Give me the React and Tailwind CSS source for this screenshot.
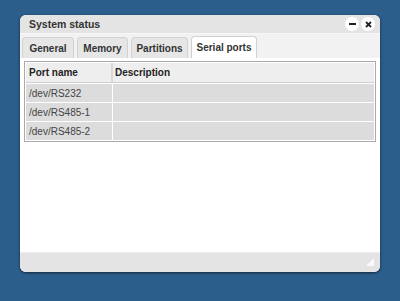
export default function App() {
  const rows = ["/dev/RS232", "/dev/RS485-1", "/dev/RS485-2"];
  const tabs = ["General", "Memory", "Partitions", "Serial ports"];
  const widths = ["w-[52px]", "w-[51px]", "w-[57px]", "w-[66px]"];
  return (
    <div
      className="w-[400px] h-[301px] bg-[#2c5e8c] pt-[15px] pl-[20px]"
      style={{ fontFamily: '"Liberation Sans", Arial, sans-serif' }}
    >
      <div className="w-[360px] h-[257px] rounded-[6px] overflow-hidden flex flex-col bg-white shadow-[0_1px_3px_rgba(0,0,0,0.6)]">
        <div className="h-[18px] bg-[#e4e4e4] flex items-center justify-between pl-[9px] pr-[5px]">
          <span className="text-[10.5px] font-bold text-[#333] leading-none">System status</span>
          <div className="flex items-center gap-[2px]">
            <div className="w-[14px] h-[14px] rounded-full bg-white flex items-center justify-center">
              <div className="w-[7px] h-[2px] bg-[#222]" />
            </div>
            <div className="w-[14px] h-[14px] rounded-full bg-white flex items-center justify-center">
              <svg width="7" height="7" viewBox="0 0 7 7">
                <path d="M1 1L6 6M6 1L1 6" stroke="#222" strokeWidth="1.8" />
              </svg>
            </div>
          </div>
        </div>
        <div className="h-[25px] bg-[#f2f2f2] flex items-end pl-[2px] gap-[3px] border-t border-[#f7f7f7]">
          {tabs.map((t, i) => {
            const active = i === 3;
            return (
              <div
                key={t}
                className={`${widths[i]} h-[21px] rounded-t-[4px] border border-b-0 flex items-center justify-center text-[10px] font-bold text-[#333] ${
                  active ? "bg-white border-[#d0d0d0] h-[22px]" : "bg-[#e6e6e6] border-[#d2d2d2]"
                }`}
              >
                {t}
              </div>
            );
          })}
        </div>
        <div className="flex-1 bg-white pt-[3px] px-[4px]">
          <div className="border border-[#aaaaaa] p-[1px]">
            <div className="flex h-[20px] bg-[#eeeeee] border-b border-[#cfcfcf]">
              <div className="w-[87px] border-r-2 border-[#d8d8d8] flex items-center pl-[3px] text-[10px] font-bold text-[#222]">
                Port name
              </div>
              <div className="flex-1 flex items-center pl-[2px] text-[10px] font-bold text-[#222]">
                Description
              </div>
            </div>
            <div className="flex flex-col gap-[1px] mt-[1px]">
              {rows.map((r) => (
                <div key={r} className="flex h-[18px] gap-[1px]">
                  <div className="w-[86px] bg-[#dcdcdc] flex items-center pl-[3px] text-[10px] text-[#444]">
                    {r}
                  </div>
                  <div className="flex-1 bg-[#dcdcdc]" />
                </div>
              ))}
            </div>
          </div>
        </div>
        <div className="h-[20px] bg-[#e4e4e4] border-t border-[#ededed] flex justify-end items-end pr-[6px] pb-[6px]">
          <svg width="8" height="8" viewBox="0 0 8 8">
            <path d="M8 0L8 8L0 8Z" fill="#fafafa" />
          </svg>
        </div>
      </div>
    </div>
  );
}
